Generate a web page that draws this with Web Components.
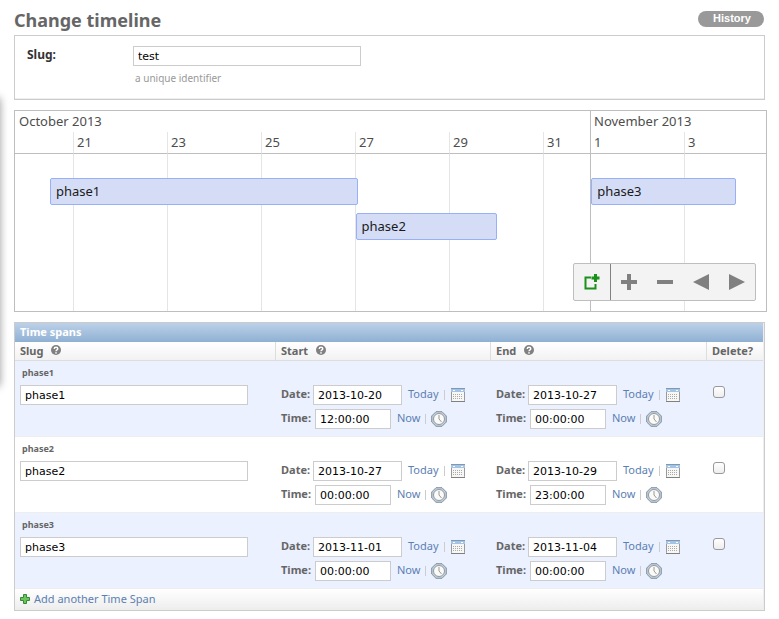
<!DOCTYPE html>
<html lang="en">
<head>
<meta charset="utf-8">
<title>Change timeline</title>
<style>
  body {
    margin: 0;
    background: #fff;
    color: #333;
    font-family: "Noto Sans", "Open Sans", sans-serif;
    font-size: 12px;
    line-height: 16px;
  }
</style>
</head>
<body>
<admin-page>
  <page-header slot="header" heading="Change timeline"></page-header>
  <slug-panel value="test" help="a unique identifier"></slug-panel>
  <time-line></time-line>
  <span-table></span-table>
</admin-page>

<script>
const define = (name, render) => customElements.define(name, class extends HTMLElement {
  connectedCallback() {
    if (this.shadowRoot) return;
    this.attachShadow({ mode: "open" }).innerHTML = render(this);
  }
});

const spans = [
  { slug: "phase1", start: ["2013-10-20", "12:00:00"], end: ["2013-10-27", "00:00:00"] },
  { slug: "phase2", start: ["2013-10-27", "00:00:00"], end: ["2013-10-29", "23:00:00"] },
  { slug: "phase3", start: ["2013-11-01", "00:00:00"], end: ["2013-11-04", "00:00:00"] }
];

const fieldStyle = `
  *, *::before { box-sizing: border-box; }
  input[type=text] {
    height: 20px; margin: 0; padding: 1px 4px; border: 1px solid #ccc;
    background: #fff; color: #000; font: 11px/16px "DejaVu Sans", sans-serif; border-radius: 0;
  }
  a { color: #5b80b2; text-decoration: none; }`;

define("admin-page", () => `
  <style>
    :host { display: block; position: relative; overflow: hidden; padding: 9px 14px 8px; }
    main { display: flex; flex-direction: column; gap: 10px; }
    .edge { position: absolute; left: -20px; top: 98px; width: 20px; height: 288px; box-shadow: 0 0 9px rgba(0,0,0,.4); }
  </style>
  <div class="edge"></div>
  <slot name="header"></slot>
  <main><slot></slot></main>`);

define("page-header", el => `
  <style>
    :host { display: flex; justify-content: space-between; align-items: flex-start; height: 26px; }
    h1 { margin: 0; color: #666; font: bold 18px/22px "Noto Sans", sans-serif; }
    a { margin: 2px 1px 0 0; padding: 0 13px 1px 15px; border-radius: 8px; background: #999; color: #fff;
        font: bold 11px/15px "Liberation Sans", sans-serif; text-decoration: none; }
  </style>
  <h1>${el.getAttribute("heading")}</h1>
  <a href="#history">History</a>`);

define("slug-panel", el => `
  <style>
    ${fieldStyle}
    :host { display: grid; grid-template-columns: 106px 1fr; box-sizing: border-box; height: 65px;
            padding: 10px 12px; border: 1px solid #ccc; box-shadow: inset 0 -1px #eee; }
    label { font-weight: bold; line-height: 18px; }
    input[type=text] { width: 228px; max-width: 100%; }
    p { margin: 4px 0 0 2px; color: #999; font-size: 10px; line-height: 16px; }
  </style>
  <label for="slug">Slug:</label>
  <div><input type="text" id="slug" value="${el.getAttribute("value")}"><p>${el.getAttribute("help")}</p></div>`);

define("time-bar", el => `
  <style>
    :host { display: grid; height: 27px;
            grid-template-columns: ${el.getAttribute("from")}fr ${el.getAttribute("length")}fr ${752 - el.getAttribute("from") - el.getAttribute("length")}fr; }
    div { grid-column: 2; box-sizing: border-box; border: 1px solid #97b0f8; border-radius: 2px; background: #d5ddf6;
          padding: 0 5px; color: #1a1a1a; font: 13px/25px "Noto Sans", sans-serif; }
  </style>
  <div><slot></slot></div>`);

define("time-line", () => `
  <style>
    :host { display: grid; position: relative; margin-right: -2px; height: 202px; box-sizing: border-box; border: 1px solid #bebebe;
            font-size: 13px; color: #4d4d4d; }
    .axis, .bars { grid-area: 1 / 1; min-width: 0; }
    .axis { display: grid; grid-template-columns: 58fr 94fr 94fr 94fr 94fr 94fr 47fr 94fr 82fr; grid-template-rows: 21px 22px 1fr; }
    .axis > * { border-left: 1px solid #e5e5e5; padding-left: 3px; line-height: 21px; white-space: nowrap; }
    .axis .month { grid-row: 1; border-color: transparent; }
    .axis .first { border-left-color: #bebebe; }
    .axis .day { grid-row: 2; border-bottom: 1px solid #bebebe; }
    .axis .none { border-left: 0; }
    .axis .line { grid-row: 3; }
    .bars { display: flex; flex-direction: column; gap: 8px; padding-top: 67px; }
    .rows { display: grid; }
    .rows > * { grid-area: 1 / 1; }
    .tools { position: absolute; right: 10px; bottom: 10px; display: flex; box-sizing: border-box; height: 38px;
             border: 1px solid #bebebe; border-radius: 2px; background: #f3f3f3; }
    button { display: grid; place-items: center; width: 36px; padding: 0; border: 0; background: none; }
    button:first-child { width: 37px; border-right: 1px solid #808080; }
    svg { display: block; width: 18px; height: 18px; }
  </style>
  <div class="axis">
    <div class="month" style="grid-column: 1 / 8">October 2013</div>
    <div class="month first" style="grid-column: 8 / 10">November 2013</div>
    ${["", 21, 23, 25, 27, 29, 31, 1, 3].map((d, i) => {
      const c = i === 0 ? "none" : i === 7 ? "first" : "";
      return `<div class="day ${c}" style="grid-column: ${i + 1}">${d}</div><div class="line ${c}" style="grid-column: ${i + 1}"></div>`;
    }).join("")}
  </div>
  <div class="bars">
    <div class="rows"><time-bar from="35" length="308">phase1</time-bar><time-bar from="577" length="145">phase3</time-bar></div>
    <time-bar from="341" length="142">phase2</time-bar>
  </div>
  <div class="tools">
    <button aria-label="Create event"><svg viewBox="0 0 18 18"><path d="M8 4.500H2.500V15.500H12.500V11" fill="none" stroke="#1a911a" stroke-width="2"/><path d="M12.500 1V9M8.500 5H16.500" stroke="#1a911a" stroke-width="3"/></svg></button>
    <button aria-label="Zoom in"><svg viewBox="0 0 18 18"><path d="M9 1V17M1 9H17" stroke="#808080" stroke-width="4"/></svg></button>
    <button aria-label="Zoom out"><svg viewBox="0 0 18 18"><path d="M1 9H17" stroke="#808080" stroke-width="4"/></svg></button>
    <button aria-label="Move left"><svg viewBox="0 0 18 18"><path d="M1 9L17 1V17Z" fill="#808080"/></svg></button>
    <button aria-label="Move right"><svg viewBox="0 0 18 18"><path d="M17 9L1 1V17Z" fill="#808080"/></svg></button>
  </div>`);

define("help-mark", () => `
  <style>:host { display: inline-block; width: 10px; height: 10px; } svg { display: block; }</style>
  <svg width="10" height="10" viewBox="0 0 10 10" role="img" aria-label="Help"><circle cx="5" cy="5" r="5" fill="#808080"/><path d="M3.200 3.900C3.200 1.700 6.800 1.800 6.800 3.800C6.800 5 5 4.900 5 6.300" fill="none" stroke="#fff" stroke-width="1.400"/><circle cx="5" cy="7.900" r=".8" fill="#fff"/></svg>`);

const calendar = `<svg width="16" height="16" viewBox="0 0 16 16" aria-hidden="true"><rect x="1.500" y="1.500" width="13" height="13" rx="1" fill="#f7f7f5" stroke="#999"/><path d="M1 2H15V5H1Z" fill="#a4c4e6"/><path d="M1 1.500H15" stroke="#8298b0"/><path d="M3 3.500H5M11 3.500H13" stroke="#fff"/><path d="M3 7.500H13M3 9.500H13M3 11.500H13" stroke="#aaa" stroke-dasharray="1 1"/><path d="M1 14.500H15" stroke="#808080"/></svg>`;
const clock = `<svg width="16" height="16" viewBox="0 0 16 16" aria-hidden="true"><path d="M5 .7H11L15.300 5V11L11 15.300H5L.7 11V5Z" fill="#bfd0e2" stroke="#8291a0"/><circle cx="8" cy="8" r="5.500" fill="#fafaf8" stroke="#999"/><path d="M8 4V8L10.500 11" fill="none" stroke="#999"/></svg>`;

define("date-time", el => {
  const id = el.getAttribute("name");
  return `
  <style>
    ${fieldStyle}
    :host { display: flex; flex-direction: column; gap: 4px; }
    div { display: flex; align-items: center; height: 20px; white-space: nowrap; }
    label { color: #666; font-weight: bold; font-size: 11px; width: 32px; flex: none; padding-bottom: 2px; }
    .time label { width: 34px; }
    .date input { width: 89px; }
    .time input { width: 76px; }
    a { font-size: 11px; margin-left: 6px; padding-bottom: 2px; }
    i { width: 1px; height: 10px; margin: 0 5px; background: #ccc; }
    a.icon { margin: 0; padding: 0; }
    svg { display: block; }
  </style>
  <div class="date"><label for="${id}-d">Date:</label><input type="text" id="${id}-d" value="${el.getAttribute("date")}"><a href="#today">Today</a><i></i><a class="icon" href="#calendar" aria-label="Calendar">${calendar}</a></div>
  <div class="time"><label for="${id}-t">Time:</label><input type="text" id="${id}-t" value="${el.getAttribute("time")}"><a href="#now">Now</a><i></i><a class="icon" href="#clock" aria-label="Clock">${clock}</a></div>`;
});

define("span-table", () => `
  <style>
    ${fieldStyle}
    :host { display: block; border: 1px solid #ccc; padding: 0 1px 1px 0; background: #eee; }
    h2 { margin: 0; padding: 0 5px 2px; color: #fff; font: bold 11px/17px "Noto Sans", sans-serif;
         background: linear-gradient(#bcd1e8, #8fb0d3); }
    table { width: 100%; border-collapse: separate; border-spacing: 0; table-layout: fixed; background: #fff; }
    th { height: 19px; padding: 0 5px; text-align: left; color: #666; font-size: 11px; line-height: 18px;
         border-left: 1px solid #ddd; border-bottom: 1px solid #ddd; background: linear-gradient(#fff, #f2f2f2); }
    th:first-child { border-left: 0; }
    th:last-child { padding-right: 0; }
    help-mark { margin-left: 5px; }
    td { height: 76px; padding: 4px 5px; vertical-align: top; border-bottom: 1px solid #eee; }
    td + td { padding: 24px 0 0 6px; }
    tr:nth-child(odd) td { background: #ebf1ff; }
    p { margin: 0 2px 4px; color: #666; font-weight: bold; font-size: 9px; line-height: 16px; }
    .slug { width: 228px; max-width: 100%; }
    input[type=checkbox] { appearance: none; display: block; width: 12px; height: 12px; margin: 1px; border: 1px solid #999;
        border-radius: 3px; background: linear-gradient(#fff, #eee); }
    footer { padding: 0 5px; height: 20px; background: linear-gradient(#fff, #eee); }
    footer a { display: flex; align-items: center; gap: 4px; font-size: 11px; line-height: 20px; }
  </style>
  <h2>Time spans</h2>
  <table>
    <colgroup><col><col style="width: 215px"><col style="width: 216px"><col style="width: 57px"></colgroup>
    <thead><tr><th>Slug <help-mark></help-mark></th><th>Start <help-mark></help-mark></th><th>End <help-mark></help-mark></th><th>Delete?</th></tr></thead>
    <tbody>${spans.map(s => `
      <tr>
        <td><p>${s.slug}</p><input class="slug" type="text" aria-label="Slug" value="${s.slug}"></td>
        <td><date-time name="start" date="${s.start[0]}" time="${s.start[1]}"></date-time></td>
        <td><date-time name="end" date="${s.end[0]}" time="${s.end[1]}"></date-time></td>
        <td><input type="checkbox" aria-label="Delete ${s.slug}"></td>
      </tr>`).join("")}
    </tbody>
  </table>
  <footer><a href="#add"><svg width="10" height="10" viewBox="0 0 10 10" aria-hidden="true"><path d="M3.500 .5H6.500V3.500H9.500V6.500H6.500V9.500H3.500V6.500H.5V3.500H3.500Z" fill="#6cc55c" stroke="#358a38"/></svg>Add another Time Span</a></footer>`);
</script>
</body>
</html>
